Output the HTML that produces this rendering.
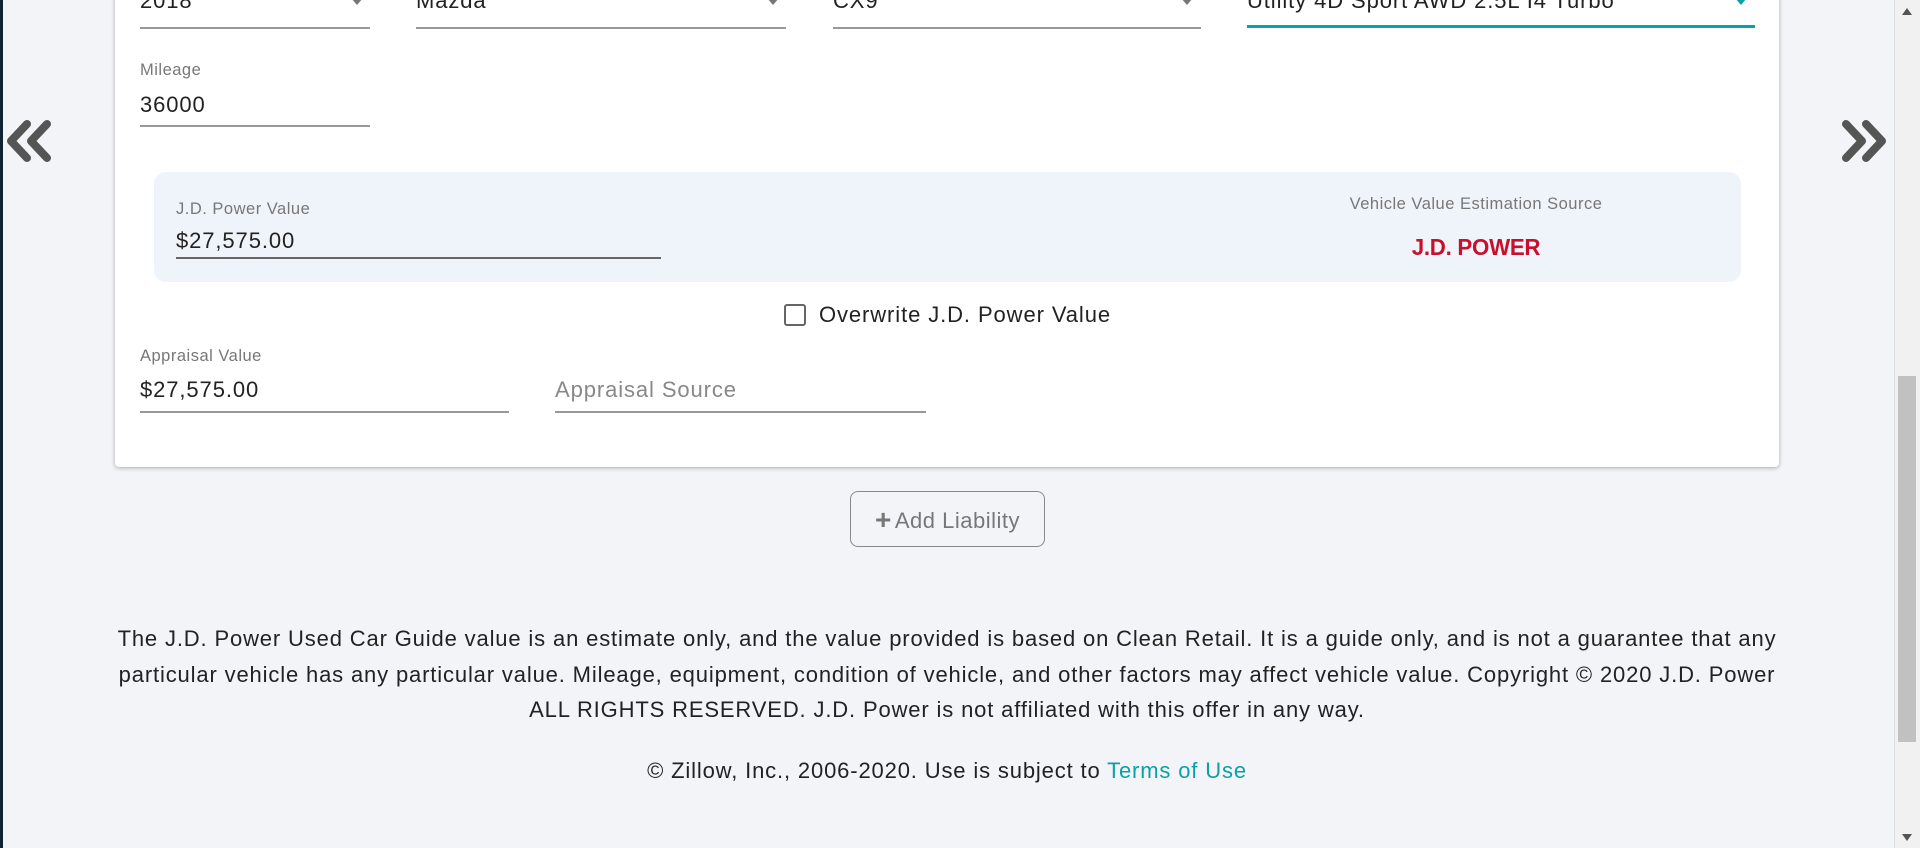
<!DOCTYPE html>
<html><head><meta charset="utf-8">
<style>
*{box-sizing:border-box;margin:0;padding:0}
html,body{width:1920px;height:848px;overflow:hidden}
body{background:#f3f4f8;font-family:"Liberation Sans",Arial,sans-serif;color:#222;position:relative}
.abs{position:absolute}
.card{left:115px;top:-30px;width:1664px;height:497px;background:#fff;border-radius:4px;box-shadow:0 1px 4px rgba(0,0,0,.3)}
.line{position:absolute;height:1px;background:#8a8a8a}
.val{position:absolute;font-size:22px;letter-spacing:.9px;color:#222;white-space:nowrap}
.lab{position:absolute;font-size:16.5px;letter-spacing:.5px;color:#777;white-space:nowrap}
.arr{position:absolute;width:0;height:0;border-left:6px solid transparent;border-right:6px solid transparent;border-top:7px solid #777}
.dis{position:absolute;left:100px;width:1694px;text-align:center;font-size:22px;letter-spacing:.85px;line-height:35.5px;color:#222}
</style></head><body>
<div class="abs" style="left:0;top:0;width:3px;height:848px;background:#123"></div>
<div class="abs card"></div>

<div class="val" style="left:140px;top:-12px">2018</div>
<div class="line" style="left:140px;top:27px;width:230px;height:2px;background:#999"></div>
<div class="arr" style="left:351px;top:-2px"></div>
<div class="val" style="left:416px;top:-12px">Mazda</div>
<div class="line" style="left:416px;top:27px;width:370px;height:2px;background:#999"></div>
<div class="arr" style="left:767px;top:-2px"></div>
<div class="val" style="left:833px;top:-12px">CX9</div>
<div class="line" style="left:833px;top:27px;width:368px;height:2px;background:#999"></div>
<div class="arr" style="left:1181px;top:-2px"></div>
<div class="val" style="left:1247px;top:-12px">Utility 4D Sport AWD 2.5L I4 Turbo</div>
<div class="line" style="left:1247px;top:25px;width:508px;height:3px;background:#0aa1a8"></div>
<div class="arr" style="left:1735px;top:-2px;border-top-color:#0aa1a8"></div>

<div class="lab" style="left:140px;top:61px">Mileage</div>
<div class="val" style="left:140px;top:92px">36000</div>
<div class="line" style="left:140px;top:125px;width:230px;height:2px;background:#999"></div>

<svg class="abs" style="left:3px;top:120px" width="50" height="42" viewBox="0 0 50 42"><path d="M24 4 L8 21 L24 38 M44 4 L28 21 L44 38" fill="none" stroke="#555" stroke-width="8" stroke-linecap="round" stroke-linejoin="round"/></svg>
<svg class="abs" style="left:1840px;top:120px" width="50" height="42" viewBox="0 0 50 42"><path d="M6 4 L22 21 L6 38 M26 4 L42 21 L26 38" fill="none" stroke="#555" stroke-width="8" stroke-linecap="round" stroke-linejoin="round"/></svg>

<div class="abs" style="left:154px;top:172px;width:1587px;height:110px;background:#eff4fb;border-radius:12px"></div>
<div class="lab" style="left:176px;top:200px">J.D. Power Value</div>
<div class="val" style="left:176px;top:228px">$27,575.00</div>
<div class="line" style="left:176px;top:257px;width:485px;height:2px;background:#666"></div>
<div class="lab" style="left:1276px;top:195px;width:400px;text-align:center">Vehicle Value Estimation Source</div>
<div class="abs" style="left:1366px;top:234px;width:220px;text-align:center;font-size:23px;font-weight:bold;color:#c8102e;transform:scaleX(.97);letter-spacing:-.3px">J.D. POWER</div>

<div class="abs" style="left:784px;top:304px;width:22px;height:22px;border:2px solid #666;border-radius:3px"></div>
<div class="val" style="left:819px;top:302px">Overwrite J.D. Power Value</div>

<div class="lab" style="left:140px;top:347px">Appraisal Value</div>
<div class="val" style="left:140px;top:377px">$27,575.00</div>
<div class="line" style="left:140px;top:411px;width:369px;height:2px;background:#999"></div>
<div class="val" style="left:555px;top:377px;color:#888">Appraisal Source</div>
<div class="line" style="left:555px;top:411px;width:371px;height:2px;background:#999"></div>

<div class="abs" style="left:850px;top:491px;width:195px;height:56px;border:1px solid #888;border-radius:8px;color:#777;font-size:22px;letter-spacing:.5px;line-height:54px;text-align:center;white-space:nowrap"><span style="font-weight:bold;font-size:28px;position:relative;top:1px;margin-right:3px">+</span>Add Liability</div>

<div class="dis" style="top:621px">The J.D. Power Used Car Guide value is an estimate only, and the value provided is based on Clean Retail. It is a guide only, and is not a guarantee that any<br>particular vehicle has any particular value. Mileage, equipment, condition of vehicle, and other factors may affect vehicle value. Copyright © 2020 J.D. Power<br>ALL RIGHTS RESERVED. J.D. Power is not affiliated with this offer in any way.</div>
<div class="dis" style="top:753px">© Zillow, Inc., 2006-2020. Use is subject to <span style="color:#0aa1a8">Terms of Use</span></div>

<div class="abs" style="left:1894px;top:0;width:26px;height:848px;background:#f1f1f1;border-left:1px solid #ddd"></div>
<div class="abs" style="left:1898px;top:376px;width:18px;height:366px;background:#c1c1c1"></div>
<div class="abs" style="left:1902px;top:8px;width:0;height:0;border-left:5px solid transparent;border-right:5px solid transparent;border-bottom:7px solid #555"></div>
<div class="abs" style="left:1902px;top:834px;width:0;height:0;border-left:5px solid transparent;border-right:5px solid transparent;border-top:7px solid #555"></div>
</body></html>
